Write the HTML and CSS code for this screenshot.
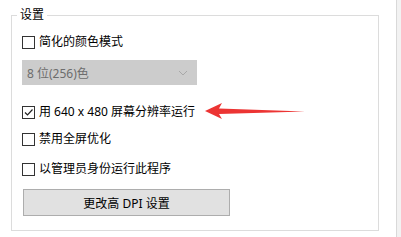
FILE: index.html
```html
<!DOCTYPE html>
<html lang="zh-CN">
<head>
  <meta charset="UTF-8" />
  <title>设置</title>
  <link rel="stylesheet" href="styles.css">
</head>
<body>
  <div class="page">
    <fieldset class="settings">
      <legend>设置</legend>

      <label class="check">
        <span class="box"></span>
        <span>简化的颜色模式</span>
      </label>

      <div class="select">
        <span>8 位(256)色</span>
        <svg class="chevron" width="10" height="6" viewBox="0 0 10 6">
          <path d="M1 1 L5 5 L9 1" fill="none" stroke="#a8a8a8" stroke-width="1"/>
        </svg>
      </div>

      <label class="check row-640">
        <span class="box">
          <svg width="11" height="11" viewBox="0 0 11 11">
            <path d="M2 5.5 L4.5 8 L9.5 2.5" fill="none" stroke="#222" stroke-width="1.2"/>
          </svg>
        </span>
        <span>用 640 x 480 屏幕分辨率运行</span>
        <svg class="arrow" width="104" height="20" viewBox="0 0 104 20">
          <path d="M0 12 L17 4 L14 9.5 L100 12.5 L14 15 L17 20 Z" fill="#ec3433"/>
        </svg>
      </label>

      <label class="check row-full">
        <span class="box"></span>
        <span>禁用全屏优化</span>
      </label>

      <label class="check row-admin">
        <span class="box"></span>
        <span>以管理员身份运行此程序</span>
      </label>

      <button class="dpi">更改高 DPI 设置</button>
    </fieldset>
  </div>
</body>
</html>
```

FILE: styles.css
```css
* { box-sizing: border-box; margin: 0; padding: 0; }
body {
  font-family: "Noto Sans", "Noto Sans CJK SC", sans-serif;
  font-size: 12px;
  color: #000;
  background: #f2f2f2;
}

.page {
  width: 397px;
  height: 237px;
  background: #fff;
  border-right: 1px solid #d9d9d9;
  padding: 7px 0 0 11px;
}

.settings {
  width: 368px;
  border: 1px solid #dcdcdc;
  padding: 10px 0 14px 10px;
  display: flex;
  flex-direction: column;
  align-items: flex-start;
}
.settings legend {
  line-height: 16px;
  padding: 0 3px;
  margin-left: -5px;
}

.check {
  position: relative;
  display: flex;
  align-items: center;
  gap: 4px;
  height: 18px;
  line-height: 18px;
}
.box {
  width: 13px;
  height: 13px;
  border: 1px solid #333;
  background: #fff;
  display: flex;
  align-items: center;
  justify-content: center;
}

.select {
  margin-top: 9px;
  width: 175px;
  height: 25px;
  background: #cccccc;
  color: #6d6d6d;
  display: flex;
  align-items: center;
  justify-content: space-between;
  padding: 0 9px 0 5px;
}

.row-640 { margin-top: 18px; }
.row-full { margin-top: 9px; }
.row-admin { margin-top: 12px; }

.arrow {
  position: absolute;
  left: 183px;
  top: -4px;
}

.dpi {
  margin-top: 11px;
  margin-left: 1px;
  width: 207px;
  height: 27px;
  background: #e1e1e1;
  border: 1px solid #adadad;
  font-family: inherit;
  font-size: 12px;
  color: #000;
}
```
